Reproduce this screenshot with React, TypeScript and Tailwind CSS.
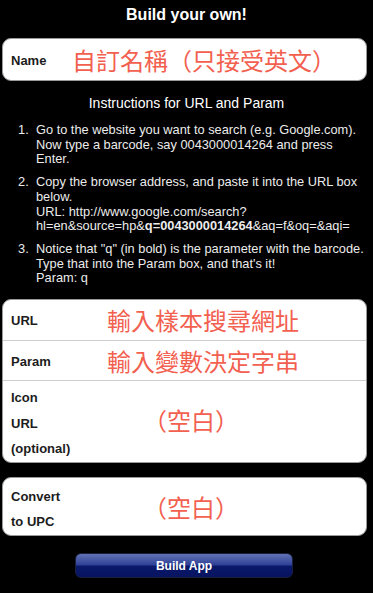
const sans = "font-['Liberation_Sans','Helvetica','Arial',sans-serif]";
const cjk = "font-['Noto_Sans_CJK_TC','Noto_Sans_CJK_SC',sans-serif]";

function Hint({ text, className = "" }: { text: string; className?: string }) {
  return (
    <span className={`${cjk} text-[24px] leading-[28px] text-[#f2604f] ${className}`}>
      {text}
    </span>
  );
}

function Label({ children }: { children: React.ReactNode }) {
  return (
    <span className={`${sans} text-[13px] font-bold text-[#1c1c1c]`}>{children}</span>
  );
}

const steps = [
  <>
    Go to the website you want to search (e.g. Google.com).
    <br />
    Now type a barcode, say 0043000014264 and press
    <br />
    Enter.
  </>,
  <>
    Copy the browser address, and paste it into the URL box
    <br />
    below.
    <br />
    URL: http://www.google.com/search?
    <br />
    hl=en&amp;source=hp&amp;<b>q=0043000014264</b>&amp;aq=f&amp;oq=&amp;aqi=
  </>,
  <>
    Notice that "q" (in bold) is the parameter with the barcode.
    <br />
    Type that into the Param box, and that's it!
    <br />
    Param: q
  </>,
];

export default function App() {
  return (
    <div className={`${sans} h-[593px] w-[373px] overflow-hidden bg-black`}>
      <h1 className="pt-[5px] text-center text-[16px] font-bold leading-[19px] text-white">
        Build your own!
      </h1>

      <div className="ml-[2px] mt-[14px] flex h-[43px] w-[365px] items-center rounded-[9px] border border-[#9a9a9a] bg-white pl-[8px]">
        <span className="w-[61px]">
          <Label>Name</Label>
        </span>
        <Hint text="自訂名稱（只接受英文）" />
      </div>

      <h2 className="mt-[14px] text-center text-[14px] leading-[16px] text-white">
        Instructions for URL and Param
      </h2>

      <ol className="mt-[12px] flex flex-col gap-[8px] text-[12.8px] leading-[14.7px] text-[#ececec]">
        {steps.map((step, i) => (
          <li key={i} className="flex">
            <span className="w-[36px] shrink-0 pl-[18px]">{i + 1}.</span>
            <span>{step}</span>
          </li>
        ))}
      </ol>

      <div className="ml-[2px] mt-[13px] w-[365px] overflow-hidden rounded-[9px] border border-[#9a9a9a] bg-white">
        <div className="flex h-[41px] items-center border-b border-[#cdcdcd] pl-[8px]">
          <span className="w-[96px]">
            <Label>URL</Label>
          </span>
          <Hint text="輸入樣本搜尋網址" />
        </div>
        <div className="flex h-[40px] items-center border-b border-[#cdcdcd] pl-[8px]">
          <span className="w-[96px]">
            <Label>Param</Label>
          </span>
          <Hint text="輸入變數決定字串" />
        </div>
        <div className="flex h-[81px] items-center pl-[8px]">
          <span className="w-[132px] pt-[4px] leading-[24.5px]">
            <Label>
              Icon
              <br />
              URL
              <br />
              (optional)
            </Label>
          </span>
          <Hint text="（空白）" className="-mt-[4px]" />
        </div>
      </div>

      <div className="ml-[2px] mt-[14px] flex h-[59px] w-[365px] items-center rounded-[9px] border border-[#9a9a9a] bg-white pl-[8px]">
        <span className="w-[132px] pt-[4px] leading-[24px]">
          <Label>
            Convert
            <br />
            to UPC
          </Label>
        </span>
        <Hint text="（空白）" />
      </div>

      <button className="ml-[75px] mt-[17px] flex h-[25px] w-[218px] items-center justify-center rounded-[6px] border border-[#1a1f3a] bg-[linear-gradient(to_bottom,#6272b4_0%,#2e4096_48%,#0a186a_52%,#081460_100%)] text-[12px] font-bold text-white">
        Build App
      </button>
    </div>
  );
}
